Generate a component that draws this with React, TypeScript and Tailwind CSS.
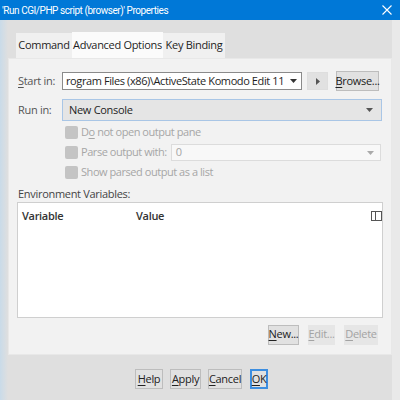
import React from "react";

const U = ({ c }: { c: string }) => <span className="underline underline-offset-2">{c}</span>;

const Btn = ({ children, disabled, className = "" }: { children: React.ReactNode; disabled?: boolean; className?: string }) => (
  <div
    className={`h-[20px] flex items-center justify-center whitespace-nowrap ${
      disabled ? "bg-[#e6e6e6] text-[#a3a3a3] border border-[#e6e6e6]" : "bg-[#e1e1e1] text-[#222] border border-[#bdbdbd]"
    } ${className}`}
  >
    {children}
  </div>
);

const Check = ({ children }: { children: React.ReactNode }) => (
  <div className="flex items-center gap-[3px] text-[#a6a6a6] whitespace-nowrap tracking-[-0.45px]">
    <div className="w-[13px] h-[13px] bg-[#c4c4c4] rounded-[2px] shrink-0" />
    {children}
  </div>
);

const Caret = ({ color = "#555" }: { color?: string }) => (
  <svg width="7" height="4" viewBox="0 0 7 4" className="shrink-0">
    <path d="M0 0 L7 0 L3.5 4 Z" fill={color} />
  </svg>
);

export default function App() {
  return (
    <div
      className="w-[400px] h-[400px] flex flex-col bg-[#dfdfdf] text-[11px] text-[#1e1e1e] overflow-hidden tracking-[-0.3px]"
      style={{ fontFamily: '"Open Sans", "Noto Sans", sans-serif' }}
    >
      <div className="h-[20px] bg-[#0078d7] text-white flex items-center justify-between pl-[2px] pr-[8px]">
        <span className="text-[10px] tracking-[-0.45px]" style={{ fontFamily: 'Roboto, "Open Sans", sans-serif' }}>
          'Run CGI/PHP script (browser)' Properties
        </span>
        <svg width="10" height="10" viewBox="0 0 10 10">
          <path d="M0.5 0.5 L9.5 9.5 M9.5 0.5 L0.5 9.5" stroke="white" strokeWidth="1.1" />
        </svg>
      </div>
      <div className="flex flex-1">
        <div className="w-[8px] bg-gradient-to-r from-[#c9dbe9] to-[#dfdfdf]" />
        <div className="flex-1 flex flex-col">
          <div className="h-[38px] flex items-end pl-[8px] whitespace-nowrap">
            <div className="h-[25px] w-[56px] bg-[#f0f0f0] flex items-center justify-center">Command</div>
            <div className="h-[26px] w-[91px] bg-[#fbfbfb] flex items-center justify-center">Advanced Options</div>
            <div className="h-[25px] w-[62px] bg-[#f0f0f0] flex items-center justify-center">Key Binding</div>
          </div>
          <div className="h-[297px] bg-[#f2f2f2] border border-[#e8e8e8] flex flex-col pl-[8px]">
            <div className="mt-[13px] flex items-center h-[18px]">
              <span className="w-[45px] pl-[1px] text-[#555]">
                <U c="S" />tart in:
              </span>
              <div className="w-[240px] h-[18px] bg-white border border-[#8a8a8a] flex items-center justify-between pl-[3px] pr-[4px] overflow-hidden whitespace-nowrap">
                <span className="tracking-[-0.4px]">rogram Files (x86)\ActiveState Komodo Edit 11</span>
                <Caret color="#333" />
              </div>
              <div className="ml-[5px] w-[21px] h-[18px] bg-[#e1e1e1] border border-[#dedede] flex items-center justify-center">
                <svg width="4" height="7" viewBox="0 0 4 7">
                  <path d="M0 0 L4 3.5 L0 7 Z" fill="#555" />
                </svg>
              </div>
              <Btn className="ml-[8px] w-[43px] h-[18px]">
                <span>
                  <U c="B" />rowse...
                </span>
              </Btn>
            </div>
            <div className="mt-[9px] flex items-center h-[22px]">
              <span className="w-[45px] pl-[1px] text-[#555]">Run in:</span>
              <div className="w-[320px] h-[22px] bg-[#e5e5e5] border border-[#a9c6e6] flex items-center justify-between pl-[6px] pr-[8px]">
                <span>New Console</span>
                <Caret />
              </div>
            </div>
            <div className="mt-[5px] pl-[48px] flex flex-col gap-[7px]">
              <div className="h-[13px] flex items-center">
                <Check>
                  <span>
                    D<U c="o" /> not open output pane
                  </span>
                </Check>
              </div>
              <div className="h-[13px] w-[316px] flex items-center">
                <Check>
                  <span>Parse output with:</span>
                </Check>
                <div className="ml-[4px] flex-1 h-[17px] bg-[#f8f8f8] border border-[#dcdcdc] flex items-center justify-between pl-[4px] pr-[6px] text-[#a6a6a6]">
                  <span>0</span>
                  <Caret color="#aaa" />
                </div>
              </div>
              <div className="h-[13px] flex items-center">
                <Check>
                  <span>Show parsed output as a list</span>
                </Check>
              </div>
            </div>
            <div className="mt-[7px] pl-[1px] text-[#444] h-[16px] flex items-center">Environment Variables:</div>
            <div className="w-[366px] h-[116px] bg-white border border-[#cfcfcf] relative">
              <div className="flex items-center h-[12px] mt-[7px] pl-[4px] font-semibold text-[#333]">
                <span className="w-[114px]">Variable</span>
                <span>Value</span>
              </div>
              <div className="absolute right-[0px] top-[8px] w-[11px] h-[10px] border border-[#555] flex">
                <div className="w-[4px] border-r border-[#555]" />
              </div>
            </div>
            <div className="mt-[6px] flex justify-end pr-[13px] gap-[9px] h-[21px] items-center">
              <Btn className="w-[31px]">
                <span>
                  <U c="N" />ew...
                </span>
              </Btn>
              <Btn disabled className="w-[27px]">
                <span>
                  <U c="E" />dit...
                </span>
              </Btn>
              <Btn disabled className="w-[34px]">
                <span>
                  <U c="D" />elete
                </span>
              </Btn>
            </div>
          </div>
          <div className="flex-1 flex items-start justify-center pt-[14px] gap-[7px] pl-[3px]">
            <Btn className="w-[28px]">
              <span>
                <U c="H" />elp
              </span>
            </Btn>
            <Btn className="w-[31px]">
              <span>
                <U c="A" />pply
              </span>
            </Btn>
            <Btn className="w-[34px]">
              <span>
                <U c="C" />ancel
              </span>
            </Btn>
            <div className="ml-[1px] w-[18px] h-[20px] bg-[#e1e1e1] border-2 border-[#3d8ee0] flex items-center justify-center">
              <span>
                <U c="O" />K
              </span>
            </div>
          </div>
        </div>
        <div className="w-[8px] bg-[#e9e9e9]" />
      </div>
    </div>
  );
}
